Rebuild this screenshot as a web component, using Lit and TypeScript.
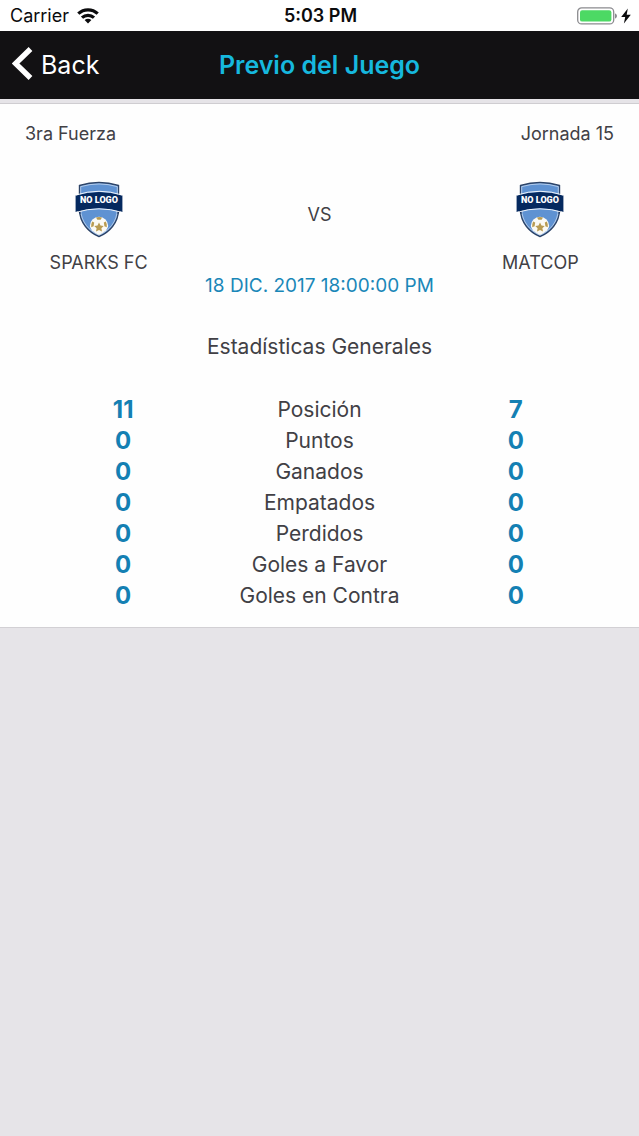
import { LitElement, html, css, svg } from "lit";
import { customElement, property } from "lit/decorators.js";

interface Stat {
  label: string;
  home: number;
  away: number;
}

const STATS: Stat[] = [
  { label: "Posición", home: 11, away: 7 },
  { label: "Puntos", home: 0, away: 0 },
  { label: "Ganados", home: 0, away: 0 },
  { label: "Empatados", home: 0, away: 0 },
  { label: "Perdidos", home: 0, away: 0 },
  { label: "Goles a Favor", home: 0, away: 0 },
  { label: "Goles en Contra", home: 0, away: 0 },
];

const ballPatches = svg`
  <path d="M24 41.600l1.500 2.900 3.200.5-2.300 2.300.6 3.200L24 49l-3 1.500.6-3.200-2.300-2.300 3.200-.5z" />
  <path d="M21 36.500q3-1 6 0L25.600 38.700h-3.200z" />
  <path d="M17.200 40.600l2 .9-.6 3.800-2.400 1q-.4-3.200 1-5.700z" />
  <path d="M30.800 40.600l-2 .9.6 3.800 2.400 1q.4-3.200-1-5.700z" />
`;

/* Status bar with carrier, clock and battery. */
@customElement("status-bar")
export class StatusBar extends LitElement {
  static styles = css`
    :host {
      display: grid;
      grid-template-columns: 1fr auto 1fr;
      align-items: center;
      height: 31px;
      padding: 0 8px 0 10px;
      background: #ffffff;
      color: #0b0b0d;
      font-size: 18px;
    }
    .carrier {
      display: flex;
      align-items: center;
      gap: 8px;
    }
    .clock {
      font-weight: 600;
    }
    .power {
      display: flex;
      align-items: center;
      justify-content: flex-end;
      gap: 4px;
    }
    svg {
      display: block;
    }
  `;

  render() {
    return html`
      <div class="carrier">
        <span>Carrier</span>
        <svg width="22" height="16" viewBox="0 0 22 16" aria-hidden="true">
          <g fill="none" stroke="#0b0b0d" stroke-width="3.200">
            <path d="M1.300 5.600C6.700.5 15.300.5 20.700 5.600" />
            <path d="M5 9.700c3.400-3.200 8.600-3.200 12 0" />
          </g>
          <path d="M11 15.500l-3.400-3.400q3.400-2.600 6.800 0z" fill="#0b0b0d" />
        </svg>
      </div>
      <div class="clock">5:03 PM</div>
      <div class="power">
        <svg width="40" height="18" viewBox="0 0 40 18" aria-hidden="true">
          <rect x=".7" y=".9" width="36" height="16" rx="4" fill="none" stroke="#8b8b8f" stroke-width="1.300" />
          <rect x="3" y="3.200" width="31.400" height="11.400" rx="2.200" fill="#4cd964" />
          <path d="M38 6.300q2 1 2 2.700t-2 2.700z" fill="#8b8b8f" />
        </svg>
        <svg width="10" height="16" viewBox="0 0 10 16" aria-hidden="true">
          <path d="M6.800.4L.2 9h4L2.900 15.600 9.800 6.700H5.700z" fill="#0b0b0d" />
        </svg>
      </div>
    `;
  }
}

/* Placeholder crest and name of a team. */
@customElement("team-badge")
export class TeamBadge extends LitElement {
  @property() name = "";

  static styles = css`
    :host {
      display: flex;
      flex-direction: column;
      align-items: center;
      gap: 12px;
    }
    .crest {
      display: block;
    }
    .crest-text {
      font: 900 9px Roboto, sans-serif;
      fill: #ffffff;
    }
    .name {
      line-height: 24px;
      white-space: nowrap;
    }
  `;

  render() {
    return html`
      <svg class="crest" width="48" height="58" viewBox="0 0 48 58" role="img" aria-label="NO LOGO">
        <path
          d="M4.500 4.500Q24-1.500 43.500 4.500V28C43.500 42 34 51.500 24 55.500 14 51.500 4.500 42 4.500 28z"
          fill="#5f92d2" stroke="#2d4468" stroke-width="1.400" />
        <path
          d="M5.700 5.600Q24 .3 42.300 5.600V28C42.300 41 33.500 50.200 24 54.200 14.500 50.200 5.700 41 5.700 28z"
          fill="none" stroke="#d5e4f6" stroke-width=".7" />
        <path d="M2 29l3.400 4.200V28.500zM46 29l-3.400 4.200V28.500z" fill="#0c2550" />
        <path d="M.6 14.600Q24 7.200 47.400 14.600V31Q24 23.600.6 31z" fill="#05295f" />
        <path d="M1 14Q24 6.500 47 14M1 31.400Q24 24.200 47 31.400" fill="none" stroke="#ffffff" stroke-width=".9" />
        <text class="crest-text" x="24" y="22" text-anchor="middle">NO LOGO</text>
        <path d="M14.800 45a9.200 9.200 0 1 1 18.400 0Q32.600 47.600 31 49.600 27.500 52.700 24 54 20.500 52.700 17 49.600 15.400 47.600 14.800 45z" fill="#fbfaf5" />
        <g fill="#b89b52">${ballPatches}</g>
      </svg>
      <div class="name">${this.name}</div>
    `;
  }
}

@customElement("app-root")
export class AppRoot extends LitElement {
  static styles = css`
    :host {
      display: block;
      min-height: 100vh;
      background: #e6e4e8;
      color: #414045;
      font-family: Inter, "Liberation Sans", sans-serif;
      font-size: 18px;
    }
    .nav {
      display: grid;
      grid-template-columns: 1fr auto 1fr;
      align-items: center;
      height: 68px;
      padding: 0 12px;
      background: #121113;
    }
    .back {
      display: flex;
      align-items: center;
      justify-self: start;
      gap: 8px;
      padding: 0;
      border: 0;
      background: none;
      color: #ffffff;
      font: inherit;
      font-size: 25px;
      cursor: pointer;
    }
    .title {
      margin: 0;
      color: #16b8de;
      font-size: 25px;
      font-weight: 600;
    }
    .card {
      margin-top: 4px;
      padding: 17px 25px 16px;
      border-top: 1px solid #cfcdd1;
      border-bottom: 1px solid #d2d0d4;
      background: #fefefe;
    }
    .meta {
      display: flex;
      justify-content: space-between;
      line-height: 26px;
    }
    .match {
      display: grid;
      grid-template-columns: 1fr 2fr 1fr;
      margin-top: 34px;
      text-align: center;
    }
    .versus {
      padding-top: 22px;
      line-height: 24px;
    }
    .date {
      color: #1a87b8;
      font-size: 19px;
      line-height: 22px;
      text-align: center;
    }
    .heading {
      margin: 35px 0 32px;
      font-size: 21px;
      font-weight: 400;
      line-height: 30px;
      text-align: center;
    }
    .stats {
      width: 100%;
      border-collapse: collapse;
      table-layout: fixed;
      font-size: 21px;
      line-height: 31px;
      text-align: center;
    }
    .stats td,
    .stats th {
      padding: 0;
      font-weight: 400;
    }
    .stats .value {
      color: #1480b3;
      font-size: 24px;
      font-weight: 700;
    }
  `;

  render() {
    return html`
      <status-bar></status-bar>
      <header class="nav">
        <button class="back" type="button">
          <svg width="21" height="36" viewBox="0 0 21 36" aria-hidden="true">
            <path d="M18.500 2L3.500 16.500 18.500 31" fill="none" stroke="#ffffff" stroke-width="5.400" />
          </svg>
          Back
        </button>
        <h1 class="title">Previo del Juego</h1>
      </header>
      <main class="card">
        <div class="meta">
          <span>3ra Fuerza</span>
          <span>Jornada 15</span>
        </div>
        <div class="match">
          <team-badge name="SPARKS FC"></team-badge>
          <div class="versus">VS</div>
          <team-badge name="MATCOP"></team-badge>
        </div>
        <div class="date">18 DIC. 2017 18:00:00 PM</div>
        <h2 class="heading">Estadísticas Generales</h2>
        <table class="stats">
          <tbody>
            ${STATS.map(
              (s) => html`
                <tr>
                  <td class="value">${s.home}</td>
                  <th scope="row">${s.label}</th>
                  <td class="value">${s.away}</td>
                </tr>
              `
            )}
          </tbody>
        </table>
      </main>
    `;
  }
}
